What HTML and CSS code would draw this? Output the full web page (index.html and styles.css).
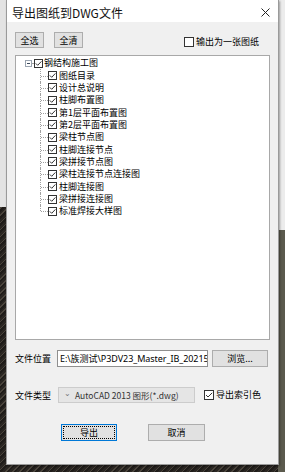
FILE: index.html
```html
<!DOCTYPE html>
<html lang="zh-CN">
<head>
<meta charset="utf-8">
<title>导出图纸到DWG文件</title>
<link rel="stylesheet" href="styles.css">
</head>
<body>
<div class="dialog">
  <div class="titlebar">
    <span class="title">导出图纸到DWG文件</span>
    <svg class="close" viewBox="0 0 9 9" width="9" height="9"><path d="M0.5 0.5L8.5 8.5M8.5 0.5L0.5 8.5" stroke="#222" stroke-width="1" fill="none"/></svg>
  </div>
  <div class="content">
    <div class="toolbar">
      <button class="btn sm">全选</button>
      <button class="btn sm">全清</button>
      <label class="check one">
        <svg class="cb" viewBox="0 0 10 10" width="10" height="10"><rect x=".5" y=".5" width="9" height="9" fill="#fff" stroke="#333"/></svg>
        <span>输出为一张图纸</span>
      </label>
    </div>
    <div class="tree">
      <div class="root-row">
        <span class="exp"></span>
        <span class="dash"></span>
        <svg class="cb" viewBox="0 0 9 9" width="9" height="9"><rect x=".5" y=".5" width="8" height="8" fill="#fff" stroke="#333"/><path d="M1.8 4.4l1.9 1.9L7.4 2.4" fill="none" stroke="#333"/></svg>
        <span class="label">钢结构施工图</span>
      </div>
      <div class="children">
        <div class="row"><svg class="cb" viewBox="0 0 9 9" width="9" height="9"><rect x=".5" y=".5" width="8" height="8" fill="#fff" stroke="#333"/><path d="M1.8 4.4l1.9 1.9L7.4 2.4" fill="none" stroke="#333"/></svg><span class="label">图纸目录</span></div>
        <div class="row"><svg class="cb" viewBox="0 0 9 9" width="9" height="9"><rect x=".5" y=".5" width="8" height="8" fill="#fff" stroke="#333"/><path d="M1.8 4.4l1.9 1.9L7.4 2.4" fill="none" stroke="#333"/></svg><span class="label">设计总说明</span></div>
        <div class="row"><svg class="cb" viewBox="0 0 9 9" width="9" height="9"><rect x=".5" y=".5" width="8" height="8" fill="#fff" stroke="#333"/><path d="M1.8 4.4l1.9 1.9L7.4 2.4" fill="none" stroke="#333"/></svg><span class="label">柱脚布置图</span></div>
        <div class="row"><svg class="cb" viewBox="0 0 9 9" width="9" height="9"><rect x=".5" y=".5" width="8" height="8" fill="#fff" stroke="#333"/><path d="M1.8 4.4l1.9 1.9L7.4 2.4" fill="none" stroke="#333"/></svg><span class="label">第1层平面布置图</span></div>
        <div class="row"><svg class="cb" viewBox="0 0 9 9" width="9" height="9"><rect x=".5" y=".5" width="8" height="8" fill="#fff" stroke="#333"/><path d="M1.8 4.4l1.9 1.9L7.4 2.4" fill="none" stroke="#333"/></svg><span class="label">第2层平面布置图</span></div>
        <div class="row"><svg class="cb" viewBox="0 0 9 9" width="9" height="9"><rect x=".5" y=".5" width="8" height="8" fill="#fff" stroke="#333"/><path d="M1.8 4.4l1.9 1.9L7.4 2.4" fill="none" stroke="#333"/></svg><span class="label">梁柱节点图</span></div>
        <div class="row"><svg class="cb" viewBox="0 0 9 9" width="9" height="9"><rect x=".5" y=".5" width="8" height="8" fill="#fff" stroke="#333"/><path d="M1.8 4.4l1.9 1.9L7.4 2.4" fill="none" stroke="#333"/></svg><span class="label">柱脚连接节点</span></div>
        <div class="row"><svg class="cb" viewBox="0 0 9 9" width="9" height="9"><rect x=".5" y=".5" width="8" height="8" fill="#fff" stroke="#333"/><path d="M1.8 4.4l1.9 1.9L7.4 2.4" fill="none" stroke="#333"/></svg><span class="label">梁拼接节点图</span></div>
        <div class="row"><svg class="cb" viewBox="0 0 9 9" width="9" height="9"><rect x=".5" y=".5" width="8" height="8" fill="#fff" stroke="#333"/><path d="M1.8 4.4l1.9 1.9L7.4 2.4" fill="none" stroke="#333"/></svg><span class="label">梁柱连接节点连接图</span></div>
        <div class="row"><svg class="cb" viewBox="0 0 9 9" width="9" height="9"><rect x=".5" y=".5" width="8" height="8" fill="#fff" stroke="#333"/><path d="M1.8 4.4l1.9 1.9L7.4 2.4" fill="none" stroke="#333"/></svg><span class="label">柱脚连接图</span></div>
        <div class="row"><svg class="cb" viewBox="0 0 9 9" width="9" height="9"><rect x=".5" y=".5" width="8" height="8" fill="#fff" stroke="#333"/><path d="M1.8 4.4l1.9 1.9L7.4 2.4" fill="none" stroke="#333"/></svg><span class="label">梁拼接连接图</span></div>
        <div class="row last"><svg class="cb" viewBox="0 0 9 9" width="9" height="9"><rect x=".5" y=".5" width="8" height="8" fill="#fff" stroke="#333"/><path d="M1.8 4.4l1.9 1.9L7.4 2.4" fill="none" stroke="#333"/></svg><span class="label">标准焊接大样图</span></div>
      </div>
    </div>
    <div class="field-row file-row">
      <span class="field-label">文件位置</span>
      <div class="input"><span>E:\族测试\P3DV23_Master_IB_202153</span></div>
      <button class="btn browse">浏览...</button>
    </div>
    <div class="field-row type-row">
      <span class="field-label">文件类型</span>
      <div class="combo"><span class="chev">&#8964;</span><span>AutoCAD 2013 图形(*.dwg)</span></div>
      <label class="check idx">
        <svg class="cb" viewBox="0 0 10 10" width="10" height="10"><rect x=".5" y=".5" width="9" height="9" fill="#fff" stroke="#333"/><path d="M2 5l2 2L8.2 2.8" fill="none" stroke="#333"/></svg>
        <span>导出索引色</span>
      </label>
    </div>
    <div class="actions">
      <button class="btn act primary"><span class="focus">导出</span></button>
      <button class="btn act">取消</button>
    </div>
  </div>
</div>
</body>
</html>
```

FILE: styles.css
```css
html, body {
  margin: 0;
  padding: 0;
}
body {
  width: 285px;
  height: 472px;
  overflow: hidden;
  font-family: "Noto Sans CJK SC", "Noto Sans", sans-serif;
  color: #000;
  background:
    linear-gradient(#e3e3e3, #e3e3e3) left top / 6px 207px no-repeat,
    linear-gradient(#ececec, #ececec) right top / 7px 230px no-repeat,
    linear-gradient(#5b5a4d, #5b5a4d) right bottom / 7px 242px no-repeat,
    repeating-linear-gradient(135deg, #2a2622 0 2px, #4a443c 2px 3px, #1f1c19 3px 5px),
    #3a3530;
}
.dialog {
  margin-left: 6px;
  width: 273px;
  height: 465px;
  box-sizing: border-box;
  border: 1px solid #9a9a9a;
  border-top: none;
  background: #f0f0f0;
  box-shadow: 1px 1px 2px rgba(0,0,0,0.35);
  display: flex;
  flex-direction: column;
}
.titlebar {
  height: 22px;
  background: #fff;
  display: flex;
  align-items: center;
  justify-content: space-between;
  padding: 0 8px 0 5px;
  flex-shrink: 0;
}
.title {
  font-size: 12px;
  line-height: 14px;
  color: #111;
  margin-top: 3px;
}
.close {
  display: block;
  margin-top: 3px;
}
.content {
  padding: 0 8px;
  display: flex;
  flex-direction: column;
}
.btn {
  font-family: inherit;
  font-size: 9px;
  line-height: 1;
  color: #000;
  background: #e1e1e1;
  border: 1px solid #adadad;
  border-radius: 0;
  padding: 0;
  margin: 0;
  display: flex;
  align-items: center;
  justify-content: center;
  box-sizing: border-box;
}
.toolbar {
  margin-top: 10px;
  height: 16px;
  display: flex;
  align-items: flex-start;
}
.btn.sm {
  width: 29px;
  height: 16px;
  margin-right: 10px;
}
.check {
  display: flex;
  align-items: center;
  font-size: 9px;
  line-height: 10px;
  white-space: nowrap;
}
.check .cb {
  display: block;
  margin-right: 2px;
  flex-shrink: 0;
}
.check.one {
  margin-left: auto;
  margin-right: 11px;
  margin-top: 5px;
}
.tree {
  margin-top: 7px;
  height: 285px;
  box-sizing: border-box;
  border: 1px solid #a8a8a8;
  background: #fff;
  padding-top: 1px;
  font-size: 9px;
}
.root-row {
  height: 12.4px;
  display: flex;
  align-items: center;
  padding-left: 9px;
}
.exp {
  width: 7px;
  height: 7px;
  box-sizing: border-box;
  border: 1px solid #9aa4b0;
  position: relative;
  flex-shrink: 0;
}
.exp::after {
  content: "";
  position: absolute;
  left: 1px;
  right: 1px;
  top: 2px;
  height: 1px;
  background: #3c4a5c;
}
.dash {
  width: 2px;
  height: 0;
  border-top: 1px dotted #a0a0a0;
  flex-shrink: 0;
}
.root-row .cb {
  display: block;
  flex-shrink: 0;
  margin-right: 1px;
}
.label {
  line-height: 12px;
  white-space: nowrap;
}
.children {
  margin-left: 24px;
}
.row {
  height: 12.35px;
  display: flex;
  align-items: center;
  padding-left: 8px;
  position: relative;
}
.row::before {
  content: "";
  position: absolute;
  left: 0;
  top: 0;
  bottom: 0;
  border-left: 1px dotted #a0a0a0;
}
.row.last::before {
  bottom: 50%;
}
.row::after {
  content: "";
  position: absolute;
  left: 1px;
  width: 7px;
  top: 50%;
  border-top: 1px dotted #a0a0a0;
}
.row .cb {
  display: block;
  flex-shrink: 0;
  margin-right: 2px;
}
.field-row {
  display: flex;
  align-items: center;
  font-size: 9px;
}
.file-row {
  margin-top: 10px;
  height: 17px;
}
.field-label {
  white-space: nowrap;
}
.file-row .field-label {
  width: 42px;
}
.input {
  width: 151px;
  height: 17px;
  box-sizing: border-box;
  border: 1px solid #8f8f8f;
  background: #fff;
  overflow: hidden;
  white-space: nowrap;
  display: flex;
  align-items: center;
  padding-left: 2px;
  font-family: "Noto Sans", "Noto Sans CJK SC", sans-serif;
  font-size: 9px;
  letter-spacing: -0.05px;
}
.btn.browse {
  width: 56px;
  height: 17px;
  margin-left: 4px;
}
.type-row {
  margin-top: 20px;
  height: 16px;
}
.type-row .field-label {
  width: 43px;
}
.combo {
  width: 137px;
  height: 16px;
  box-sizing: border-box;
  border: 1px solid #cccccc;
  background: #e5e5e5;
  display: flex;
  align-items: center;
  color: #333;
  white-space: nowrap;
  font-size: 8.5px;
  overflow: hidden;
}
.chev {
  width: 16px;
  text-align: center;
  color: #777;
  font-size: 8px;
  line-height: 8px;
  margin-top: -4px;
}
.check.idx {
  margin-left: 9px;
}
.actions {
  margin-top: 21px;
  display: flex;
  padding-left: 46px;
}
.btn.act {
  width: 57px;
  height: 17px;
  margin-right: 31px;
}
.btn.primary {
  width: 56px;
  border: 1px solid #0078d7;
  padding: 1px;
}
.focus {
  flex: 1;
  align-self: stretch;
  display: flex;
  align-items: center;
  justify-content: center;
  border: 1px dotted #000;
}
```
